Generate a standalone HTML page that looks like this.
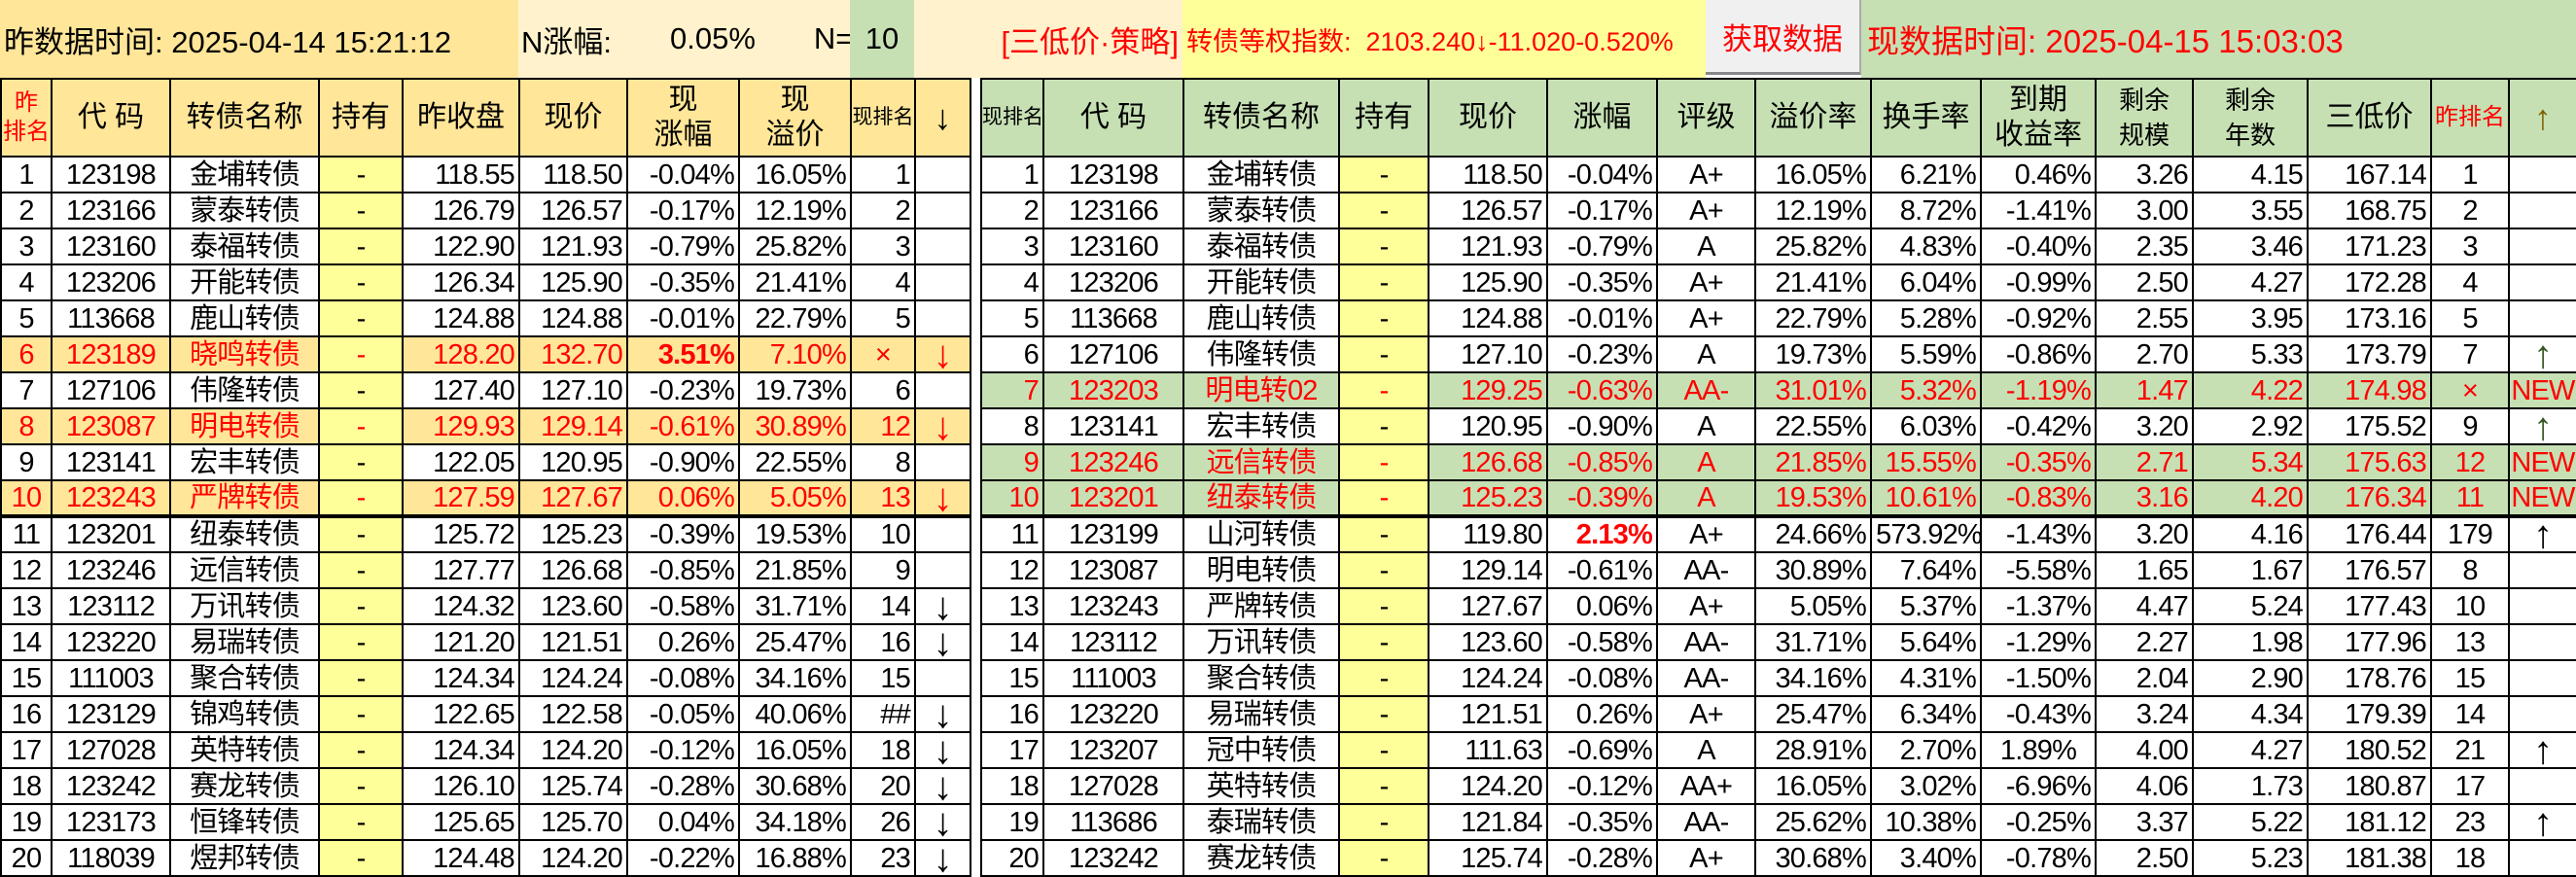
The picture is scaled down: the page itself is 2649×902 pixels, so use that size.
<!DOCTYPE html>
<html><head><meta charset="utf-8">
<style>
*{margin:0;padding:0;box-sizing:border-box}
body{width:2649px;height:902px;overflow:hidden;background:#fff;font-family:"Liberation Sans Narrow","Liberation Sans","Noto Sans CJK SC",sans-serif;font-stretch:condensed;color:#000}
.top{position:absolute;top:0;height:80px;display:flex;align-items:center;font-size:31px;white-space:nowrap}
table{position:absolute;top:80px;border-collapse:collapse;table-layout:fixed;font-size:29px}
td,th{border:2px solid #000;height:37px;padding:0 4px;white-space:nowrap;overflow:hidden;font-weight:normal;line-height:32px;letter-spacing:-0.8px}
th{height:80px;font-size:30px;line-height:36px;letter-spacing:0}
.c{text-align:center}.r{text-align:right}
.a{font-size:40px;line-height:32px;text-align:center;letter-spacing:0}
#L th{background:#ffe699}
#R th{background:#c6e0b4}
.y{background:#ffff99;text-align:center}
.hl td{background:#ffe699;color:#f00}
.hl td.y{background:#ffff99}
.g td{background:#c6e0b4;color:#f00}
.g td.y{background:#ffff99}
.red{color:#f00}
.b{font-weight:bold}
.thick td{border-bottom:4px solid #000}
.sm{font-size:21px!important}
</style></head><body>
<div class="top" style="left:0;width:533px;background:#ffe699;padding-left:4px">昨数据时间: 2025-04-14 15:21:12</div>
<div class="top" style="left:533px;width:341px;background:#fff2cc"><span style="margin-left:3px">N涨幅:</span><span style="margin-left:60px">0.05%</span><span style="margin-left:60px">N=</span></div>
<div class="top" style="left:874px;width:66px;background:#c6e0b4;justify-content:center">10</div>
<div class="top" style="left:940px;width:276px;background:#fff2cc;color:#f00;justify-content:flex-end;padding-right:4px">[三低价·策略]</div>
<div class="top" style="left:1216px;width:538px;background:#ffff99;color:#f00;font-size:27px;padding-left:4px">转债等权指数:&nbsp; 2103.240↓-11.020-0.520%</div>
<div class="top" style="left:1754px;width:160px;height:77px;background:#f0f0f0;color:#f00;justify-content:center;border-bottom:3px solid #888;border-right:2px solid #aaa">获取数据</div>
<div class="top" style="left:1914px;width:735px;background:#c6e0b4;color:#f00;padding-left:6px;font-size:33px">现数据时间: 2025-04-15 15:03:03</div>

<table id="L" style="left:0;width:997px">
<colgroup><col style="width:52px"><col style="width:122px"><col style="width:153px"><col style="width:86px"><col style="width:120px"><col style="width:111px"><col style="width:115px"><col style="width:115px"><col style="width:66px"><col style="width:57px"></colgroup>
<tr><th class="red" style="font-size:24px;line-height:30px;padding:0">昨<br>排名</th><th>代 码</th><th>转债名称</th><th>持有</th><th>昨收盘</th><th>现价</th><th>现<br>涨幅</th><th>现<br>溢价</th><th class="sm" style="padding:0">现排名</th><th style="font-size:36px">↓</th></tr>
<tr><td class="c">1</td><td class="c">123198</td><td class="c">金埔转债</td><td class="y">-</td><td class="r">118.55</td><td class="r">118.50</td><td class="r">-0.04%</td><td class="r">16.05%</td><td class="r">1</td><td></td></tr>
<tr><td class="c">2</td><td class="c">123166</td><td class="c">蒙泰转债</td><td class="y">-</td><td class="r">126.79</td><td class="r">126.57</td><td class="r">-0.17%</td><td class="r">12.19%</td><td class="r">2</td><td></td></tr>
<tr><td class="c">3</td><td class="c">123160</td><td class="c">泰福转债</td><td class="y">-</td><td class="r">122.90</td><td class="r">121.93</td><td class="r">-0.79%</td><td class="r">25.82%</td><td class="r">3</td><td></td></tr>
<tr><td class="c">4</td><td class="c">123206</td><td class="c">开能转债</td><td class="y">-</td><td class="r">126.34</td><td class="r">125.90</td><td class="r">-0.35%</td><td class="r">21.41%</td><td class="r">4</td><td></td></tr>
<tr><td class="c">5</td><td class="c">113668</td><td class="c">鹿山转债</td><td class="y">-</td><td class="r">124.88</td><td class="r">124.88</td><td class="r">-0.01%</td><td class="r">22.79%</td><td class="r">5</td><td></td></tr>
<tr class="hl"><td class="c">6</td><td class="c">123189</td><td class="c">晓鸣转债</td><td class="y">-</td><td class="r">128.20</td><td class="r">132.70</td><td class="r b">3.51%</td><td class="r">7.10%</td><td class="c">×</td><td class="a">↓</td></tr>
<tr><td class="c">7</td><td class="c">127106</td><td class="c">伟隆转债</td><td class="y">-</td><td class="r">127.40</td><td class="r">127.10</td><td class="r">-0.23%</td><td class="r">19.73%</td><td class="r">6</td><td></td></tr>
<tr class="hl"><td class="c">8</td><td class="c">123087</td><td class="c">明电转债</td><td class="y">-</td><td class="r">129.93</td><td class="r">129.14</td><td class="r">-0.61%</td><td class="r">30.89%</td><td class="r">12</td><td class="a">↓</td></tr>
<tr><td class="c">9</td><td class="c">123141</td><td class="c">宏丰转债</td><td class="y">-</td><td class="r">122.05</td><td class="r">120.95</td><td class="r">-0.90%</td><td class="r">22.55%</td><td class="r">8</td><td></td></tr>
<tr class="hl thick"><td class="c">10</td><td class="c">123243</td><td class="c">严牌转债</td><td class="y">-</td><td class="r">127.59</td><td class="r">127.67</td><td class="r">0.06%</td><td class="r">5.05%</td><td class="r">13</td><td class="a">↓</td></tr>
<tr><td class="c">11</td><td class="c">123201</td><td class="c">纽泰转债</td><td class="y">-</td><td class="r">125.72</td><td class="r">125.23</td><td class="r">-0.39%</td><td class="r">19.53%</td><td class="r">10</td><td></td></tr>
<tr><td class="c">12</td><td class="c">123246</td><td class="c">远信转债</td><td class="y">-</td><td class="r">127.77</td><td class="r">126.68</td><td class="r">-0.85%</td><td class="r">21.85%</td><td class="r">9</td><td></td></tr>
<tr><td class="c">13</td><td class="c">123112</td><td class="c">万讯转债</td><td class="y">-</td><td class="r">124.32</td><td class="r">123.60</td><td class="r">-0.58%</td><td class="r">31.71%</td><td class="r">14</td><td class="a">↓</td></tr>
<tr><td class="c">14</td><td class="c">123220</td><td class="c">易瑞转债</td><td class="y">-</td><td class="r">121.20</td><td class="r">121.51</td><td class="r">0.26%</td><td class="r">25.47%</td><td class="r">16</td><td class="a">↓</td></tr>
<tr><td class="c">15</td><td class="c">111003</td><td class="c">聚合转债</td><td class="y">-</td><td class="r">124.34</td><td class="r">124.24</td><td class="r">-0.08%</td><td class="r">34.16%</td><td class="r">15</td><td></td></tr>
<tr><td class="c">16</td><td class="c">123129</td><td class="c">锦鸡转债</td><td class="y">-</td><td class="r">122.65</td><td class="r">122.58</td><td class="r">-0.05%</td><td class="r">40.06%</td><td class="r">##</td><td class="a">↓</td></tr>
<tr><td class="c">17</td><td class="c">127028</td><td class="c">英特转债</td><td class="y">-</td><td class="r">124.34</td><td class="r">124.20</td><td class="r">-0.12%</td><td class="r">16.05%</td><td class="r">18</td><td class="a">↓</td></tr>
<tr><td class="c">18</td><td class="c">123242</td><td class="c">赛龙转债</td><td class="y">-</td><td class="r">126.10</td><td class="r">125.74</td><td class="r">-0.28%</td><td class="r">30.68%</td><td class="r">20</td><td class="a">↓</td></tr>
<tr><td class="c">19</td><td class="c">123173</td><td class="c">恒锋转债</td><td class="y">-</td><td class="r">125.65</td><td class="r">125.70</td><td class="r">0.04%</td><td class="r">34.18%</td><td class="r">26</td><td class="a">↓</td></tr>
<tr><td class="c">20</td><td class="c">118039</td><td class="c">煜邦转债</td><td class="y">-</td><td class="r">124.48</td><td class="r">124.20</td><td class="r">-0.22%</td><td class="r">16.88%</td><td class="r">23</td><td class="a">↓</td></tr>
</table>

<table id="R" style="left:1008px;width:1641px">
<colgroup><col style="width:64px"><col style="width:144px"><col style="width:160px"><col style="width:92px"><col style="width:122px"><col style="width:113px"><col style="width:101px"><col style="width:119px"><col style="width:113px"><col style="width:118px"><col style="width:100px"><col style="width:118px"><col style="width:127px"><col style="width:80px"><col style="width:70px"></colgroup>
<tr><th class="sm" style="padding:0">现排名</th><th>代 码</th><th>转债名称</th><th>持有</th><th>现价</th><th>涨幅</th><th>评级</th><th>溢价率</th><th>换手率</th><th>到期<br>收益率</th><th style="font-size:26px">剩余<br>规模</th><th style="font-size:26px">剩余<br>年数</th><th>三低价</th><th class="red" style="font-size:24px;padding:0">昨排名</th><th style="color:#806000;font-size:36px">↑</th></tr>
<tr><td class="r">1</td><td class="c">123198</td><td class="c">金埔转债</td><td class="y">-</td><td class="r">118.50</td><td class="r">-0.04%</td><td class="c">A+</td><td class="r">16.05%</td><td class="r">6.21%</td><td class="r">0.46%</td><td class="r">3.26</td><td class="r">4.15</td><td class="r">167.14</td><td class="c">1</td><td></td></tr>
<tr><td class="r">2</td><td class="c">123166</td><td class="c">蒙泰转债</td><td class="y">-</td><td class="r">126.57</td><td class="r">-0.17%</td><td class="c">A+</td><td class="r">12.19%</td><td class="r">8.72%</td><td class="r">-1.41%</td><td class="r">3.00</td><td class="r">3.55</td><td class="r">168.75</td><td class="c">2</td><td></td></tr>
<tr><td class="r">3</td><td class="c">123160</td><td class="c">泰福转债</td><td class="y">-</td><td class="r">121.93</td><td class="r">-0.79%</td><td class="c">A</td><td class="r">25.82%</td><td class="r">4.83%</td><td class="r">-0.40%</td><td class="r">2.35</td><td class="r">3.46</td><td class="r">171.23</td><td class="c">3</td><td></td></tr>
<tr><td class="r">4</td><td class="c">123206</td><td class="c">开能转债</td><td class="y">-</td><td class="r">125.90</td><td class="r">-0.35%</td><td class="c">A+</td><td class="r">21.41%</td><td class="r">6.04%</td><td class="r">-0.99%</td><td class="r">2.50</td><td class="r">4.27</td><td class="r">172.28</td><td class="c">4</td><td></td></tr>
<tr><td class="r">5</td><td class="c">113668</td><td class="c">鹿山转债</td><td class="y">-</td><td class="r">124.88</td><td class="r">-0.01%</td><td class="c">A+</td><td class="r">22.79%</td><td class="r">5.28%</td><td class="r">-0.92%</td><td class="r">2.55</td><td class="r">3.95</td><td class="r">173.16</td><td class="c">5</td><td></td></tr>
<tr><td class="r">6</td><td class="c">127106</td><td class="c">伟隆转债</td><td class="y">-</td><td class="r">127.10</td><td class="r">-0.23%</td><td class="c">A</td><td class="r">19.73%</td><td class="r">5.59%</td><td class="r">-0.86%</td><td class="r">2.70</td><td class="r">5.33</td><td class="r">173.79</td><td class="c">7</td><td class="a" style="color:#375623">↑</td></tr>
<tr class="g"><td class="r">7</td><td class="c">123203</td><td class="c">明电转02</td><td class="y">-</td><td class="r">129.25</td><td class="r">-0.63%</td><td class="c">AA-</td><td class="r">31.01%</td><td class="r">5.32%</td><td class="r">-1.19%</td><td class="r">1.47</td><td class="r">4.22</td><td class="r">174.98</td><td class="c">×</td><td class="c" style="padding:0">NEW</td></tr>
<tr><td class="r">8</td><td class="c">123141</td><td class="c">宏丰转债</td><td class="y">-</td><td class="r">120.95</td><td class="r">-0.90%</td><td class="c">A</td><td class="r">22.55%</td><td class="r">6.03%</td><td class="r">-0.42%</td><td class="r">3.20</td><td class="r">2.92</td><td class="r">175.52</td><td class="c">9</td><td class="a" style="color:#375623">↑</td></tr>
<tr class="g"><td class="r">9</td><td class="c">123246</td><td class="c">远信转债</td><td class="y">-</td><td class="r">126.68</td><td class="r">-0.85%</td><td class="c">A</td><td class="r">21.85%</td><td class="r">15.55%</td><td class="r">-0.35%</td><td class="r">2.71</td><td class="r">5.34</td><td class="r">175.63</td><td class="c">12</td><td class="c" style="padding:0">NEW</td></tr>
<tr class="g thick"><td class="r">10</td><td class="c">123201</td><td class="c">纽泰转债</td><td class="y">-</td><td class="r">125.23</td><td class="r">-0.39%</td><td class="c">A</td><td class="r">19.53%</td><td class="r">10.61%</td><td class="r">-0.83%</td><td class="r">3.16</td><td class="r">4.20</td><td class="r">176.34</td><td class="c">11</td><td class="c" style="padding:0">NEW</td></tr>
<tr><td class="r">11</td><td class="c">123199</td><td class="c">山河转债</td><td class="y">-</td><td class="r">119.80</td><td class="r b red">2.13%</td><td class="c">A+</td><td class="r">24.66%</td><td class="r">573.92%</td><td class="r">-1.43%</td><td class="r">3.20</td><td class="r">4.16</td><td class="r">176.44</td><td class="c">179</td><td class="a">↑</td></tr>
<tr><td class="r">12</td><td class="c">123087</td><td class="c">明电转债</td><td class="y">-</td><td class="r">129.14</td><td class="r">-0.61%</td><td class="c">AA-</td><td class="r">30.89%</td><td class="r">7.64%</td><td class="r">-5.58%</td><td class="r">1.65</td><td class="r">1.67</td><td class="r">176.57</td><td class="c">8</td><td></td></tr>
<tr><td class="r">13</td><td class="c">123243</td><td class="c">严牌转债</td><td class="y">-</td><td class="r">127.67</td><td class="r">0.06%</td><td class="c">A+</td><td class="r">5.05%</td><td class="r">5.37%</td><td class="r">-1.37%</td><td class="r">4.47</td><td class="r">5.24</td><td class="r">177.43</td><td class="c">10</td><td></td></tr>
<tr><td class="r">14</td><td class="c">123112</td><td class="c">万讯转债</td><td class="y">-</td><td class="r">123.60</td><td class="r">-0.58%</td><td class="c">AA-</td><td class="r">31.71%</td><td class="r">5.64%</td><td class="r">-1.29%</td><td class="r">2.27</td><td class="r">1.98</td><td class="r">177.96</td><td class="c">13</td><td></td></tr>
<tr><td class="r">15</td><td class="c">111003</td><td class="c">聚合转债</td><td class="y">-</td><td class="r">124.24</td><td class="r">-0.08%</td><td class="c">AA-</td><td class="r">34.16%</td><td class="r">4.31%</td><td class="r">-1.50%</td><td class="r">2.04</td><td class="r">2.90</td><td class="r">178.76</td><td class="c">15</td><td></td></tr>
<tr><td class="r">16</td><td class="c">123220</td><td class="c">易瑞转债</td><td class="y">-</td><td class="r">121.51</td><td class="r">0.26%</td><td class="c">A+</td><td class="r">25.47%</td><td class="r">6.34%</td><td class="r">-0.43%</td><td class="r">3.24</td><td class="r">4.34</td><td class="r">179.39</td><td class="c">14</td><td></td></tr>
<tr><td class="r">17</td><td class="c">123207</td><td class="c">冠中转债</td><td class="y">-</td><td class="r">111.63</td><td class="r">-0.69%</td><td class="c">A</td><td class="r">28.91%</td><td class="r">2.70%</td><td class="c">1.89%</td><td class="r">4.00</td><td class="r">4.27</td><td class="r">180.52</td><td class="c">21</td><td class="a">↑</td></tr>
<tr><td class="r">18</td><td class="c">127028</td><td class="c">英特转债</td><td class="y">-</td><td class="r">124.20</td><td class="r">-0.12%</td><td class="c">AA+</td><td class="r">16.05%</td><td class="r">3.02%</td><td class="r">-6.96%</td><td class="r">4.06</td><td class="r">1.73</td><td class="r">180.87</td><td class="c">17</td><td></td></tr>
<tr><td class="r">19</td><td class="c">113686</td><td class="c">泰瑞转债</td><td class="y">-</td><td class="r">121.84</td><td class="r">-0.35%</td><td class="c">AA-</td><td class="r">25.62%</td><td class="r">10.38%</td><td class="r">-0.25%</td><td class="r">3.37</td><td class="r">5.22</td><td class="r">181.12</td><td class="c">23</td><td class="a">↑</td></tr>
<tr><td class="r">20</td><td class="c">123242</td><td class="c">赛龙转债</td><td class="y">-</td><td class="r">125.74</td><td class="r">-0.28%</td><td class="c">A+</td><td class="r">30.68%</td><td class="r">3.40%</td><td class="r">-0.78%</td><td class="r">2.50</td><td class="r">5.23</td><td class="r">181.38</td><td class="c">18</td><td></td></tr>
</table>
</body></html>
